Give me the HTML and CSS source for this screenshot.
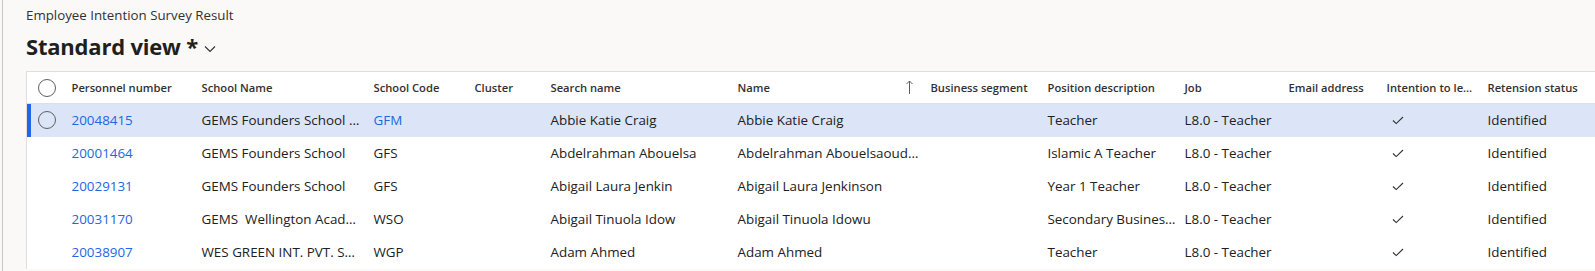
FILE: index.html
```html
<!DOCTYPE html>
<html>
<head>
    <meta name="viewport" content="width=device-width, initial-scale=1.0">
    <link rel="stylesheet" href="styles.css">
</head>
<body>
    <div class="page">
        <div class="caption">Employee Intention Survey Result</div>
        <div class="view-title">
            <h1>Standard view *</h1>
            <svg class="chevron" width="12" height="8" viewBox="0 0 12 8"><path d="M1 1.5 L6 6.5 L11 1.5" fill="none" stroke="#323130" stroke-width="1.1"/></svg>
        </div>

        <table class="grid">
            <colgroup>
                <col style="width:37px">
                <col style="width:130px">
                <col style="width:172px">
                <col style="width:101px">
                <col style="width:76px">
                <col style="width:187px">
                <col style="width:193px">
                <col style="width:117px">
                <col style="width:137px">
                <col style="width:104px">
                <col style="width:98px">
                <col style="width:101px">
                <col style="width:140px">
            </colgroup>
            <thead>
                <tr>
                    <th class="check-cell"><span class="radio"></span></th>
                    <th>Personnel number</th>
                    <th>School Name</th>
                    <th>School Code</th>
                    <th>Cluster</th>
                    <th>Search name</th>
                    <th class="sorted">Name
                        <svg class="sort-arrow" width="7" height="14" viewBox="0 0 7 14"><path d="M3.5 14 V1 M0.5 4 L3.5 1 L6.5 4" fill="none" stroke="#605e5c" stroke-width="1"/></svg>
                    </th>
                    <th>Business segment</th>
                    <th>Position description</th>
                    <th>Job</th>
                    <th>Email address</th>
                    <th>Intention to le…</th>
                    <th>Retension status</th>
                </tr>
            </thead>
            <tbody>
                <tr class="selected">
                    <td class="check-cell"><span class="radio"></span></td>
                    <td><a href="#">20048415</a></td>
                    <td>GEMS Founders School …</td>
                    <td><a href="#">GFM</a></td>
                    <td></td>
                    <td>Abbie Katie Craig</td>
                    <td>Abbie Katie Craig</td>
                    <td></td>
                    <td>Teacher</td>
                    <td>L8.0 - Teacher</td>
                    <td></td>
                    <td class="tick"><svg width="12" height="9" viewBox="0 0 12 9"><path d="M1 4.5 L4.2 7.6 L11 1" fill="none" stroke="#323130" stroke-width="1.1"/></svg></td>
                    <td>Identified</td>
                </tr>
                <tr>
                    <td class="check-cell"></td>
                    <td><a href="#">20001464</a></td>
                    <td>GEMS Founders School</td>
                    <td>GFS</td>
                    <td></td>
                    <td>Abdelrahman Abouelsa</td>
                    <td>Abdelrahman Abouelsaoud…</td>
                    <td></td>
                    <td>Islamic A Teacher</td>
                    <td>L8.0 - Teacher</td>
                    <td></td>
                    <td class="tick"><svg width="12" height="9" viewBox="0 0 12 9"><path d="M1 4.5 L4.2 7.6 L11 1" fill="none" stroke="#323130" stroke-width="1.1"/></svg></td>
                    <td>Identified</td>
                </tr>
                <tr>
                    <td class="check-cell"></td>
                    <td><a href="#">20029131</a></td>
                    <td>GEMS Founders School</td>
                    <td>GFS</td>
                    <td></td>
                    <td>Abigail Laura Jenkin</td>
                    <td>Abigail Laura Jenkinson</td>
                    <td></td>
                    <td>Year 1 Teacher</td>
                    <td>L8.0 - Teacher</td>
                    <td></td>
                    <td class="tick"><svg width="12" height="9" viewBox="0 0 12 9"><path d="M1 4.5 L4.2 7.6 L11 1" fill="none" stroke="#323130" stroke-width="1.1"/></svg></td>
                    <td>Identified</td>
                </tr>
                <tr>
                    <td class="check-cell"></td>
                    <td><a href="#">20031170</a></td>
                    <td>GEMS&nbsp; Wellington Acad…</td>
                    <td>WSO</td>
                    <td></td>
                    <td>Abigail Tinuola Idow</td>
                    <td>Abigail Tinuola Idowu</td>
                    <td></td>
                    <td>Secondary Busines…</td>
                    <td>L8.0 - Teacher</td>
                    <td></td>
                    <td class="tick"><svg width="12" height="9" viewBox="0 0 12 9"><path d="M1 4.5 L4.2 7.6 L11 1" fill="none" stroke="#323130" stroke-width="1.1"/></svg></td>
                    <td>Identified</td>
                </tr>
                <tr>
                    <td class="check-cell"></td>
                    <td><a href="#">20038907</a></td>
                    <td>WES GREEN INT. PVT. S…</td>
                    <td>WGP</td>
                    <td></td>
                    <td>Adam Ahmed</td>
                    <td>Adam Ahmed</td>
                    <td></td>
                    <td>Teacher</td>
                    <td>L8.0 - Teacher</td>
                    <td></td>
                    <td class="tick"><svg width="12" height="9" viewBox="0 0 12 9"><path d="M1 4.5 L4.2 7.6 L11 1" fill="none" stroke="#323130" stroke-width="1.1"/></svg></td>
                    <td>Identified</td>
                </tr>
            </tbody>
        </table>
    </div>
</body>
</html>
```

FILE: styles.css
```css
* {
    box-sizing: border-box;
    margin: 0;
    padding: 0;
}

body {
    font-family: "Open Sans", "Noto Sans", sans-serif;
    background-color: #faf9f8;
    color: #212121;
    height: 271px;
    overflow: hidden;
}

.page {
    margin-left: 2px;
    border-left: 1px solid #c8c6c4;
    padding: 5px 0 0 23px;
    height: 100%;
}

.caption {
    font-size: 13.3px;
    line-height: 20px;
    color: #323130;
}

.view-title {
    display: flex;
    align-items: center;
    gap: 6px;
    height: 34px;
    margin-top: 4px;
}

h1 {
    font-size: 22px;
    font-weight: 700;
    color: #201f1e;
    letter-spacing: -0.2px;
}

.chevron {
    margin-top: 6px;
}

.grid {
    margin-top: 8px;
    border-collapse: collapse;
    table-layout: fixed;
    width: 1593px;
    background-color: #fff;
    border-top: 1px solid #e1dfdd;
    border-left: 1px solid #e1dfdd;
    font-size: 13.4px;
}

.grid th {
    height: 32px;
    font-size: 11.2px;
    font-weight: 600;
    color: #323130;
    text-align: left;
    padding: 0 8px;
    border-bottom: 1px solid #e1dfdd;
    white-space: nowrap;
}

.grid td {
    height: 33px;
    padding: 0 8px;
    white-space: nowrap;
    overflow: hidden;
    color: #212121;
}

.grid a {
    color: #2266e3;
    text-decoration: none;
}

.grid .check-cell {
    padding: 0 0 0 11px;
}

.radio {
    display: block;
    width: 18px;
    height: 18px;
    border: 1px solid #605e5c;
    border-radius: 50%;
    background-color: #fff;
}

.selected td {
    background-color: #dbe5f7;
}

.selected .radio {
    background-color: transparent;
}

.selected .check-cell {
    box-shadow: inset 4px 0 0 #2266e3;
}

.sorted {
    position: relative;
}

.sort-arrow {
    position: absolute;
    right: 10px;
    top: 8px;
}

.grid .tick {
    padding-left: 13px;
}

.tick svg {
    display: block;
}
```
